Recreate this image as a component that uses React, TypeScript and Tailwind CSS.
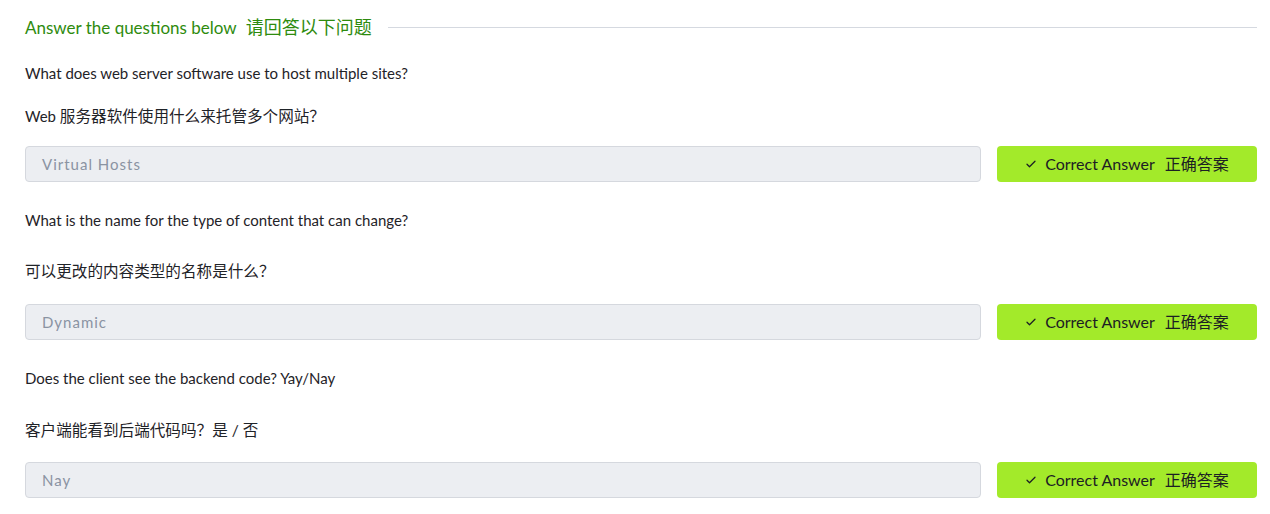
import React from 'react';

const questions = [
  {
    en: 'What does web server software use to host multiple sites?',
    zhPrefix: 'Web ',
    zh: '服务器软件使用什么来托管多个网站？',
    answer: 'Virtual Hosts',
    top: 'mt-[24px]',
    zhGap: 'mt-[23px]',
    inGap: 'mt-[20px]',
  },
  {
    en: 'What is the name for the type of content that can change?',
    zhPrefix: '',
    zh: '可以更改的内容类型的名称是什么？',
    answer: 'Dynamic',
    top: 'mt-[28px]',
    zhGap: 'mt-[31px]',
    inGap: 'mt-[23px]',
  },
  {
    en: 'Does the client see the backend code? Yay/Nay',
    zhPrefix: '',
    zh: '客户端能看到后端代码吗？是 / 否',
    answer: 'Nay',
    top: 'mt-[28px]',
    zhGap: 'mt-[32px]',
    inGap: 'mt-[22px]',
  },
];

const Check = () => (
  <svg width="12" height="12" viewBox="0 0 24 24" fill="none" stroke="currentColor" strokeWidth="2.5" strokeLinecap="round" strokeLinejoin="round">
    <path d="M4 12.5l5 5L20 6.5" />
  </svg>
);

const App: React.FC = () => {
  return (
    <div className="w-[1270px] h-[514px] bg-white pl-[25px] pr-[13px] pt-[15px] text-[#1f2328] font-['Lato','Noto_Sans_CJK_SC',sans-serif] overflow-hidden">
      {/* Heading */}
      <div className="flex items-center h-[24px]">
        <h2 className="text-[17px] text-[#2e8b0e] whitespace-nowrap">
          Answer the questions below <span className="ml-[5px] text-[18px]">请回答以下问题</span>
        </h2>
        <div className="flex-1 h-px bg-[#d5d9e0] ml-[16px]"></div>
      </div>

      {questions.map((q, i) => (
        <div key={i} className={q.top}>
          <p className="text-[15px] leading-[20px]">{q.en}</p>
          <p className={`text-[15px] leading-[20px] ${q.zhGap}`}>
            {q.zhPrefix}
            <span className="text-[15.6px]">{q.zh}</span>
          </p>
          <div className={`flex gap-[16px] ${q.inGap}`}>
            <div className="flex-1 h-[36px] flex items-center px-[16px] bg-[#eceef2] border border-[#d5d8de] rounded-[4px] text-[15px] tracking-[1px] text-[#8a93a2]">
              {q.answer}
            </div>
            <button className="w-[260px] h-[36px] flex items-center justify-center gap-[8px] bg-[#a3ea2a] rounded-[4px] text-[16px] text-[#1c2024]">
              <Check />
              <span>Correct Answer</span>
              <span className="ml-[2px]">正确答案</span>
            </button>
          </div>
        </div>
      ))}
    </div>
  );
};

export default App;
